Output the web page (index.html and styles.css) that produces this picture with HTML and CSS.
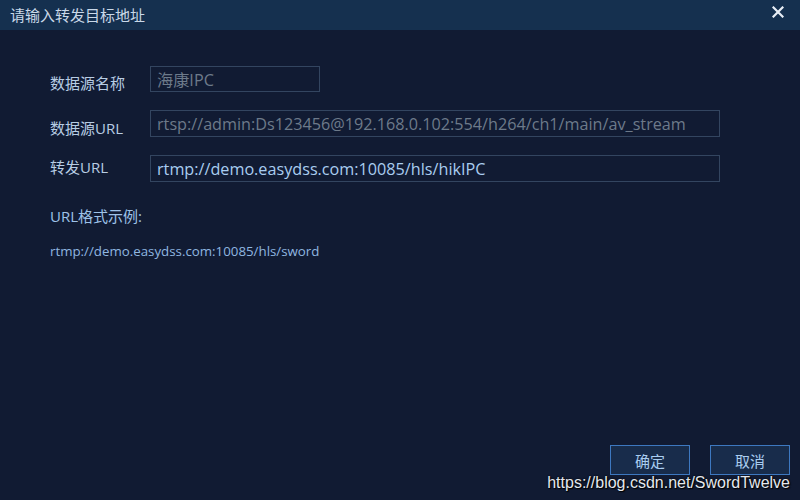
FILE: index.html
```html
<!DOCTYPE html>
<html lang="zh">
<head>
<meta charset="utf-8">
<link rel="stylesheet" href="styles.css">
</head>
<body>
<div class="dialog">
  <div class="titlebar">
    <span class="title">请输入转发目标地址</span>
    <svg class="close" width="12" height="12" viewBox="0 0 12 12"><path d="M1.5 1.5L10.5 10.5M10.5 1.5L1.5 10.5" stroke="#e8eef6" stroke-width="2.2" stroke-linecap="square"/></svg>
  </div>
  <div class="body">
    <div class="row r1">
      <span class="label">数据源名称</span>
      <div class="field short dim">海康IPC</div>
    </div>
    <div class="row r2">
      <span class="label">数据源URL</span>
      <div class="field long dim">rtsp://admin:Ds123456@192.168.0.102:554/h264/ch1/main/av_stream</div>
    </div>
    <div class="row r3">
      <span class="label">转发URL</span>
      <div class="field long bright">rtmp://demo.easydss.com:10085/hls/hikIPC</div>
    </div>
    <div class="example-title">URL格式示例:</div>
    <div class="example">rtmp://demo.easydss.com:10085/hls/sword</div>
  </div>
  <div class="footer">
    <button class="btn">确定</button>
    <button class="btn">取消</button>
  </div>
  <div class="watermark">https://blog.csdn.net/SwordTwelve</div>
</div>
</body>
</html>
```
FILE: styles.css
```css
html, body {
  margin: 0;
  padding: 0;
  width: 800px;
  height: 500px;
  overflow: hidden;
  background: #111b33;
}
.dialog {
  position: relative;
  width: 800px;
  height: 500px;
  display: flex;
  flex-direction: column;
  font-family: "Open Sans", "Noto Sans CJK SC", sans-serif;
}
.titlebar {
  height: 30px;
  background: #15304f;
  display: flex;
  align-items: center;
  justify-content: space-between;
  padding: 0 16px 0 10px;
  flex: none;
}
.title {
  font-family: "Noto Sans CJK SC", sans-serif;
  font-size: 15px;
  color: #c9d8e8;
  margin-top: -1px;
}
.close {
  margin-top: -6px;
}
.body {
  flex: 1;
  padding: 0 0 0 50px;
  display: flex;
  flex-direction: column;
}
.row {
  display: flex;
  align-items: center;
}
.r1 { margin-top: 36px; height: 26px; }
.r2 { margin-top: 18px; height: 27px; }
.r3 { margin-top: 18px; height: 27px; }
.label {
  width: 100px;
  font-family: "Open Sans", "Noto Sans CJK SC", sans-serif;
  font-size: 15px;
  color: #b8cde4;
}
.r1 .label { margin-top: 6px; }
.r2 .label { margin-top: 8px; }
.r3 .label { margin-top: -4px; }
.field {
  box-sizing: border-box;
  height: 100%;
  border: 1px solid #334560;
  display: flex;
  align-items: center;
  padding-left: 6px;
  font-size: 16.2px;
  white-space: nowrap;
  overflow: hidden;
}
.short { width: 170px; }
.long { width: 570px; }
.dim { color: #6d7a8a; }
.bright { color: #a9cdf0; }
.example-title {
  margin-top: 23px;
  font-size: 15px;
  color: #9ec2e8;
}
.example {
  margin-top: 16px;
  font-size: 13.3px;
  color: #8fb6e0;
}
.footer {
  flex: none;
  display: flex;
  justify-content: flex-end;
  gap: 20px;
  padding: 0 10px 25px 0;
}
.btn {
  width: 80px;
  height: 30px;
  background: #182c4b;
  border: 1px solid #3d78c0;
  color: #a9cdf0;
  font-family: "Noto Sans CJK SC", sans-serif;
  font-size: 15px;
  padding: 0;
}
.watermark {
  position: absolute;
  right: 10px;
  bottom: 8px;
  font-family: "Liberation Sans", sans-serif;
  font-size: 16px;
  color: #e4e8ee;
  text-shadow: 0 0 2px #000, 1px 1px 1px #000;
}
```
